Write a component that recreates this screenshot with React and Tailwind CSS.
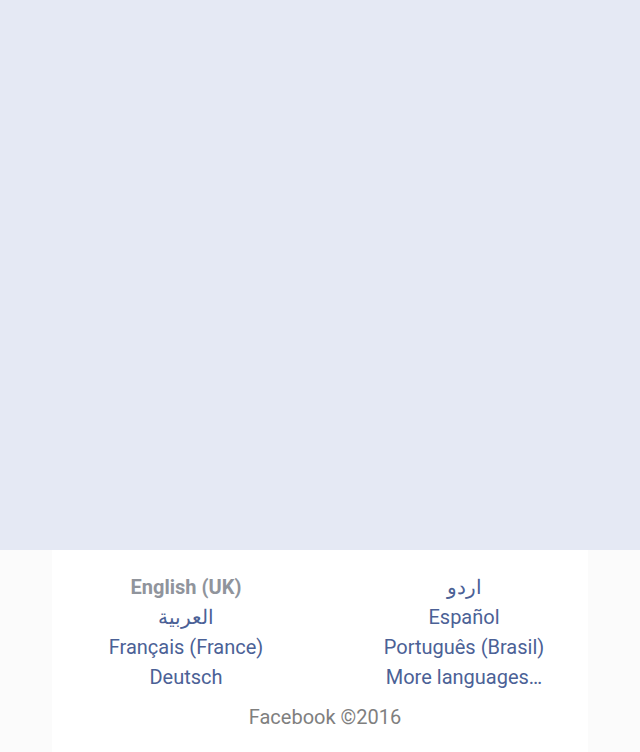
const leftLangs = [
  { label: "English (UK)", current: true },
  { label: "العربية" },
  { label: "Français (France)" },
  { label: "Deutsch" },
];

const rightLangs = [
  { label: "اردو" },
  { label: "Español" },
  { label: "Português (Brasil)" },
  { label: "More languages…" },
];

const LangLink = ({ label, current }) =>
  current ? (
    <span className="font-bold text-[#90949c]">{label}</span>
  ) : (
    <a href="#" className="text-[#4b6196]">
      {label}
    </a>
  );

export default function App() {
  return (
    <div
      className="flex h-[752px] w-[640px] flex-col bg-[#e5e9f4]"
      style={{ fontFamily: "Roboto, 'Noto Sans', sans-serif" }}
    >
      <div className="flex-1" />
      <footer className="flex h-[202px] justify-center bg-[#fbfbfb]">
        <div className="w-[536px] shrink-0 bg-white pt-[22px]">
          <div className="flex text-[20px] leading-[30px]">
            <ul className="flex w-[268px] shrink-0 flex-col items-center">
              {leftLangs.map((l) => (
                <li key={l.label}>
                  <LangLink {...l} />
                </li>
              ))}
            </ul>
            <ul className="flex w-[288px] shrink-0 flex-col items-center">
              {rightLangs.map((l) => (
                <li key={l.label}>
                  <LangLink {...l} />
                </li>
              ))}
            </ul>
          </div>
          <p className="mt-[10px] pl-[10px] text-center text-[20px] leading-[30px] text-[#7f7f7f]">
            Facebook ©2016
          </p>
        </div>
      </footer>
    </div>
  );
}
